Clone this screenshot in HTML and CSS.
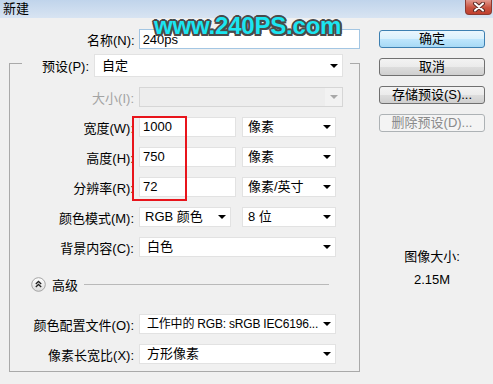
FILE: index.html
```html
<!DOCTYPE html>
<html lang="zh-CN">
<head>
    <meta charset="UTF-8">
    <title>新建</title>
    <link rel="stylesheet" href="styles.css">
</head>
<body>
    <div class="titlebar">
        <span class="title">新建</span>
        <div class="close">
            <svg width="14" height="10" viewBox="0 0 14 10">
                <path d="M3 1.5 L11 8.5 M11 1.5 L3 8.5" stroke="#5b2a25" stroke-width="4" stroke-linecap="round"/>
                <path d="M3 1.5 L11 8.5 M11 1.5 L3 8.5" stroke="#fff" stroke-width="2" stroke-linecap="round"/>
            </svg>
        </div>
    </div>

    <div class="main">
        <div class="left">
            <div class="name-row">
                <label class="name-label">名称(N):</label>
                <div class="field name-input">240ps</div>
            </div>

            <div class="group">
                <div class="preset-row">
                    <label class="preset-label">预设(P):</label>
                    <div class="field select preset-select"><span>自定</span><i class="arrow"></i></div>
                </div>

                <div class="row">
                    <label class="lbl disabled">大小(I):</label>
                    <div class="field select size-select"><span></span><b class="drop"><i class="arrow grey"></i></b></div>
                </div>
                <div class="row">
                    <label class="lbl">宽度(W):</label>
                    <div class="field num">1000</div>
                    <div class="field select unit"><span>像素</span><i class="arrow"></i></div>
                </div>
                <div class="row">
                    <label class="lbl">高度(H):</label>
                    <div class="field num">750</div>
                    <div class="field select unit"><span>像素</span><i class="arrow"></i></div>
                </div>
                <div class="row">
                    <label class="lbl">分辨率(R):</label>
                    <div class="field num">72</div>
                    <div class="field select unit"><span>像素/英寸</span><i class="arrow"></i></div>
                </div>
                <div class="row">
                    <label class="lbl">颜色模式(M):</label>
                    <div class="field select mode"><span>RGB 颜色</span><i class="arrow"></i></div>
                    <div class="field select bits"><span>8 位</span><i class="arrow"></i></div>
                </div>
                <div class="row">
                    <label class="lbl">背景内容(C):</label>
                    <div class="field select wide"><span>白色</span><i class="arrow"></i></div>
                </div>

                <div class="advanced">
                    <svg class="toggle" width="15" height="15" viewBox="0 0 15 15">
                        <defs>
                            <linearGradient id="tg" x1="0" y1="0" x2="0" y2="1">
                                <stop offset="0" stop-color="#ffffff"/>
                                <stop offset="1" stop-color="#dcdcdc"/>
                            </linearGradient>
                        </defs>
                        <circle cx="7.5" cy="7.5" r="6.8" fill="url(#tg)" stroke="#a4a4a4"/>
                        <path d="M4.8 7 L7.5 4.5 L10.2 7 M4.8 10 L7.5 7.5 L10.2 10" fill="none" stroke="#222" stroke-width="1.3"/>
                    </svg>
                    <span class="adv-text">高级</span>
                    <span class="adv-line"></span>
                </div>

                <div class="row profile">
                    <label class="lbl">颜色配置文件(O):</label>
                    <div class="field select wide"><span class="small">工作中的 RGB: sRGB IEC6196...</span><i class="arrow"></i></div>
                </div>
                <div class="row">
                    <label class="lbl">像素长宽比(X):</label>
                    <div class="field select wide"><span>方形像素</span><i class="arrow"></i></div>
                </div>

                <div class="mark"></div>
            </div>
        </div>

        <div class="right">
            <button class="btn default">确定</button>
            <button class="btn">取消</button>
            <button class="btn">存储预设(S)...</button>
            <button class="btn" disabled>删除预设(D)...</button>

            <div class="size-info">
                <div>图像大小:</div>
                <div class="size-value">2.15M</div>
            </div>
        </div>
    </div>

    <div class="watermark">www.240PS.com</div>
</body>
</html>
```

FILE: styles.css
```css
body {
    margin: 0;
    width: 493px;
    height: 384px;
    overflow: hidden;
    position: relative;
    background: #f0f0f0;
    font-family: "Liberation Sans", "Noto Sans CJK SC", sans-serif;
    font-size: 13px;
    color: #000;
}

.titlebar {
    height: 18px;
    display: flex;
    align-items: center;
    padding-left: 3px;
    background: linear-gradient(#c0d4eb, #d8e4f2);
}
.title {
    line-height: 18px;
}
.close {
    margin-left: auto;
    margin-right: 1px;
    align-self: flex-start;
    width: 27px;
    height: 15px;
    box-sizing: border-box;
    border: 1px solid #8a3a31;
    border-top: none;
    border-radius: 0 0 4px 4px;
    background: linear-gradient(#e29a90, #c9523f 55%, #c0402f);
    display: flex;
    align-items: center;
    justify-content: center;
}

.watermark {
    position: absolute;
    left: 154px;
    top: 10px;
    font-family: "Liberation Sans", sans-serif;
    font-weight: bold;
    font-size: 24px;
    line-height: 32px;
    color: #1be5f1;
    letter-spacing: -0.2px;
    text-shadow:
        2px 0 #4a4a4a, -2px 0 #4a4a4a, 0 2px #4a4a4a, 0 -2px #4a4a4a,
        1.5px 1.5px #4a4a4a, -1.5px -1.5px #4a4a4a, 1.5px -1.5px #4a4a4a, -1.5px 1.5px #4a4a4a;
}

.main {
    display: flex;
    padding: 11px 0 0 9px;
}
.left {
    width: 351px;
}
.right {
    width: 106px;
    margin-left: 19px;
    padding-top: 1px;
    display: flex;
    flex-direction: column;
}

/* inputs and fake selects */
.field {
    box-sizing: border-box;
    height: 20px;
    line-height: 18px;
    background: #fff;
    border: 1px solid #e2e2e2;
    padding-left: 5px;
    white-space: nowrap;
}
.select {
    display: flex;
    align-items: center;
    padding-right: 4px;
}
.select span {
    flex: 1;
    overflow: hidden;
}
.select .small {
    font-size: 12px;
    letter-spacing: -0.2px;
}
.arrow {
    width: 0;
    height: 0;
    border-left: 4px solid transparent;
    border-right: 4px solid transparent;
    border-top: 4px solid #000;
    margin-left: 4px;
}
.arrow.grey {
    border-top-color: #a8a8a8;
}

.name-row {
    display: flex;
    align-items: center;
}
.name-label {
    width: 126px;
    text-align: right;
    padding-right: 4px;
}
.name-input {
    width: 222px;
    border-color: #a3c6e3;
    padding-left: 3px;
    line-height: 19px;
}

.group {
    position: relative;
    margin-top: 14px;
    border: 1px solid #a9a9a9;
    padding-bottom: 7px;
}

.preset-row {
    display: flex;
    align-items: center;
    margin: -10px 9px 0 12px;
    padding-right: 7px;
    background: #f0f0f0;
}
.preset-label {
    width: 67px;
    text-align: right;
}
.preset-select {
    width: 249px;
    height: 23px;
    margin-left: 5px;
    padding-left: 7px;
}

.row {
    display: flex;
    align-items: center;
    margin-top: 10px;
}
.lbl {
    width: 124px;
    padding-right: 5px;
    text-align: right;
    white-space: nowrap;
}
.lbl.disabled {
    color: #a3a3a3;
}

.size-select {
    width: 204px;
    background: #ededed;
    border-color: #d6d6d6;
    padding-right: 0;
}
.size-select .drop {
    width: 17px;
    height: 18px;
    display: flex;
    align-items: center;
    justify-content: center;
    background: #f2f2f2;
}
.size-select .arrow {
    margin-left: 0;
}

.num {
    width: 97px;
    padding-left: 3px;
}
.unit {
    width: 94px;
    margin-left: 6px;
}
.mode {
    width: 92px;
}
.bits {
    width: 94px;
    margin-left: 11px;
}
.wide {
    width: 197px;
    padding-left: 7px;
}

.advanced {
    display: flex;
    align-items: center;
    height: 14px;
    margin-top: 20px;
    padding-left: 21px;
}
.toggle {
    display: block;
}
.adv-text {
    margin-left: 6px;
}
.adv-line {
    width: 245px;
    margin-left: 6px;
    border-top: 1px solid #b9b9b9;
}
.row.profile {
    margin-top: 23px;
}

/* red annotation box */
.mark {
    position: absolute;
    left: 122px;
    top: 52px;
    width: 51px;
    height: 81px;
    border: 2px solid #e8141b;
}

/* buttons */
.btn {
    height: 18px;
    margin-bottom: 10px;
    padding: 0;
    font: inherit;
    line-height: 16px;
    color: #000;
    border: 1px solid #707070;
    border-radius: 3px;
    background: linear-gradient(#f3f3f3 0%, #ebebeb 50%, #dddddd 51%, #cfcfcf 100%);
}
.btn.default {
    border-color: #3c7fb1;
    background: linear-gradient(#eaf6fd 0%, #d9f0fc 50%, #bee6fd 51%, #a7d9f5 100%);
}
.btn:disabled {
    color: #8a8a8a;
    border-color: #adb2b5;
    background: #f4f4f4;
}

.size-info {
    margin-top: 107px;
    text-align: center;
    line-height: 16px;
}
.size-value {
    margin-top: 7px;
}
```
